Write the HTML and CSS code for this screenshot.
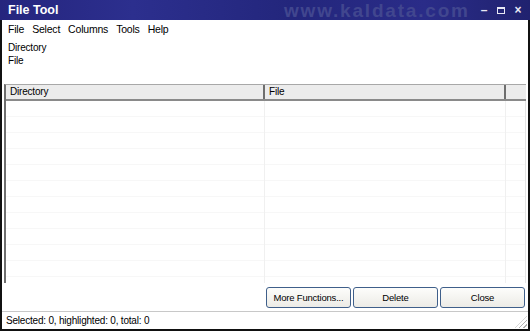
FILE: index.html
```html
<!DOCTYPE html>
<html lang="en">

<head>
    <meta charset="UTF-8">
    <title>File Tool</title>
    <link rel="stylesheet" href="styles.css">
</head>

<body>
    <div class="window">
        <div class="titlebar">
            <span class="title">File Tool</span>
            <span class="watermark">www.kaldata.com</span>
            <div class="controls">
                <span class="ctl">&#8211;</span>
                <span class="ctl max"></span>
                <span class="ctl">&#215;</span>
            </div>
        </div>

        <div class="menubar">
            <span>File</span>
            <span>Select</span>
            <span>Columns</span>
            <span>Tools</span>
            <span>Help</span>
        </div>

        <div class="fields">
            <div>Directory</div>
            <div>File</div>
        </div>

        <div class="table">
            <div class="thead">
                <div class="th col-dir">Directory</div>
                <div class="th col-file">File</div>
                <div class="th col-rest"></div>
            </div>
            <div class="tbody">
                <div class="col col-dir"></div>
                <div class="col col-file"></div>
                <div class="col col-rest"></div>
            </div>
        </div>

        <div class="buttons">
            <button>More Functions...</button>
            <button>Delete</button>
            <button>Close</button>
        </div>

        <div class="statusbar">
            <span>Selected: 0, highlighted: 0, total: 0</span>
            <span class="grip"></span>
        </div>
    </div>
</body>

</html>
```

FILE: styles.css
```css
/* File Tool window */
body {
    margin: 0;
    font-family: "Liberation Sans", Arial, sans-serif;
    font-size: 10px;
    letter-spacing: -0.2px;
    color: #000;
}
.window {
    width: 530px;
    height: 331px;
    box-sizing: border-box;
    display: flex;
    flex-direction: column;
    background: #fff;
    border-left: 2px solid #111;
    border-right: 2px solid #111;
    border-bottom: 2px solid #111;
}
.titlebar {
    height: 20px;
    margin: 0 -2px;
    display: flex;
    align-items: center;
    background: linear-gradient(90deg, #25257e 0%, #2c2f8e 25%, #23267c 55%, #2a2c88 80%, #20226f 100%);
    color: #fff;
    position: relative;
    letter-spacing: 0;
}
.title {
    font-weight: bold;
    font-size: 12.5px;
    margin-left: 8px;
}
/* watermark painted over the title bar */
.watermark {
    position: absolute;
    left: 284px;
    top: 1px;
    line-height: 20px;
    font-size: 19px;
    font-weight: bold;
    letter-spacing: 1.8px;
    color: #41468f;
}
.controls {
    margin-left: auto;
    margin-right: 8px;
    display: flex;
    gap: 9px;
    align-items: center;
}
.ctl {
    font-size: 12px;
    font-weight: bold;
    color: #e8e8f4;
    width: 8px;
    text-align: center;
}
.ctl.max {
    width: 6px;
    height: 4px;
    border: 1px solid #e8e8f4;
    border-top-width: 2px;
}
.menubar {
    height: 18px;
    display: flex;
    align-items: center;
    gap: 8px;
    padding-left: 6px;
    font-size: 10.5px;
}
.fields {
    padding: 3px 6px 0;
    height: 43px;
    line-height: 13px;
}
.table {
    flex: 1;
    display: flex;
    flex-direction: column;
    margin: 0 2px 0 2px;
    border-top: 1px solid #a8a8a8;
    border-left: 2px solid #6e6e6e;
}
.thead {
    display: flex;
    height: 14px;
    background: #ececec;
    border-bottom: 2px solid #8a8a8a;
}
.th {
    box-sizing: border-box;
    padding-left: 4px;
    line-height: 14px;
    border-right: 2px solid #6e6e6e;
}
.col-dir {
    width: 259px;
}
.col-file {
    width: 241px;
}
.col-rest {
    flex: 1;
    border-right: none;
}
.tbody {
    flex: 1;
    display: flex;
    background: repeating-linear-gradient(#fff 0, #fff 15px, #f7f7f7 15px, #f7f7f7 16px);
}
.col {
    box-sizing: border-box;
    border-right: 1px solid #f0f0f0;
}
.col.col-rest {
    border-right: 1px solid #e4e4e4;
}
.buttons {
    display: flex;
    justify-content: flex-end;
    gap: 2px;
    padding: 4px 3px 3px 0;
}
button {
    width: 85px;
    height: 21px;
    font-family: "Liberation Sans", Arial, sans-serif;
    font-size: 9.5px;
    letter-spacing: -0.2px;
    white-space: nowrap;
    color: #000;
    background: linear-gradient(#fdfdfb, #ecebe6);
    border: 1px solid #3f5f8a;
    border-radius: 3px;
    padding: 0;
}
.statusbar {
    height: 17px;
    display: flex;
    align-items: center;
    padding-left: 4px;
    border-top: 1px solid #c8c8c8;
    position: relative;
}
.grip {
    position: absolute;
    right: 1px;
    bottom: 1px;
    width: 12px;
    height: 12px;
    background: repeating-linear-gradient(135deg, transparent 0, transparent 2px, #b0b0b0 2px, #b0b0b0 3px);
    clip-path: polygon(100% 0, 100% 100%, 0 100%);
}
```
